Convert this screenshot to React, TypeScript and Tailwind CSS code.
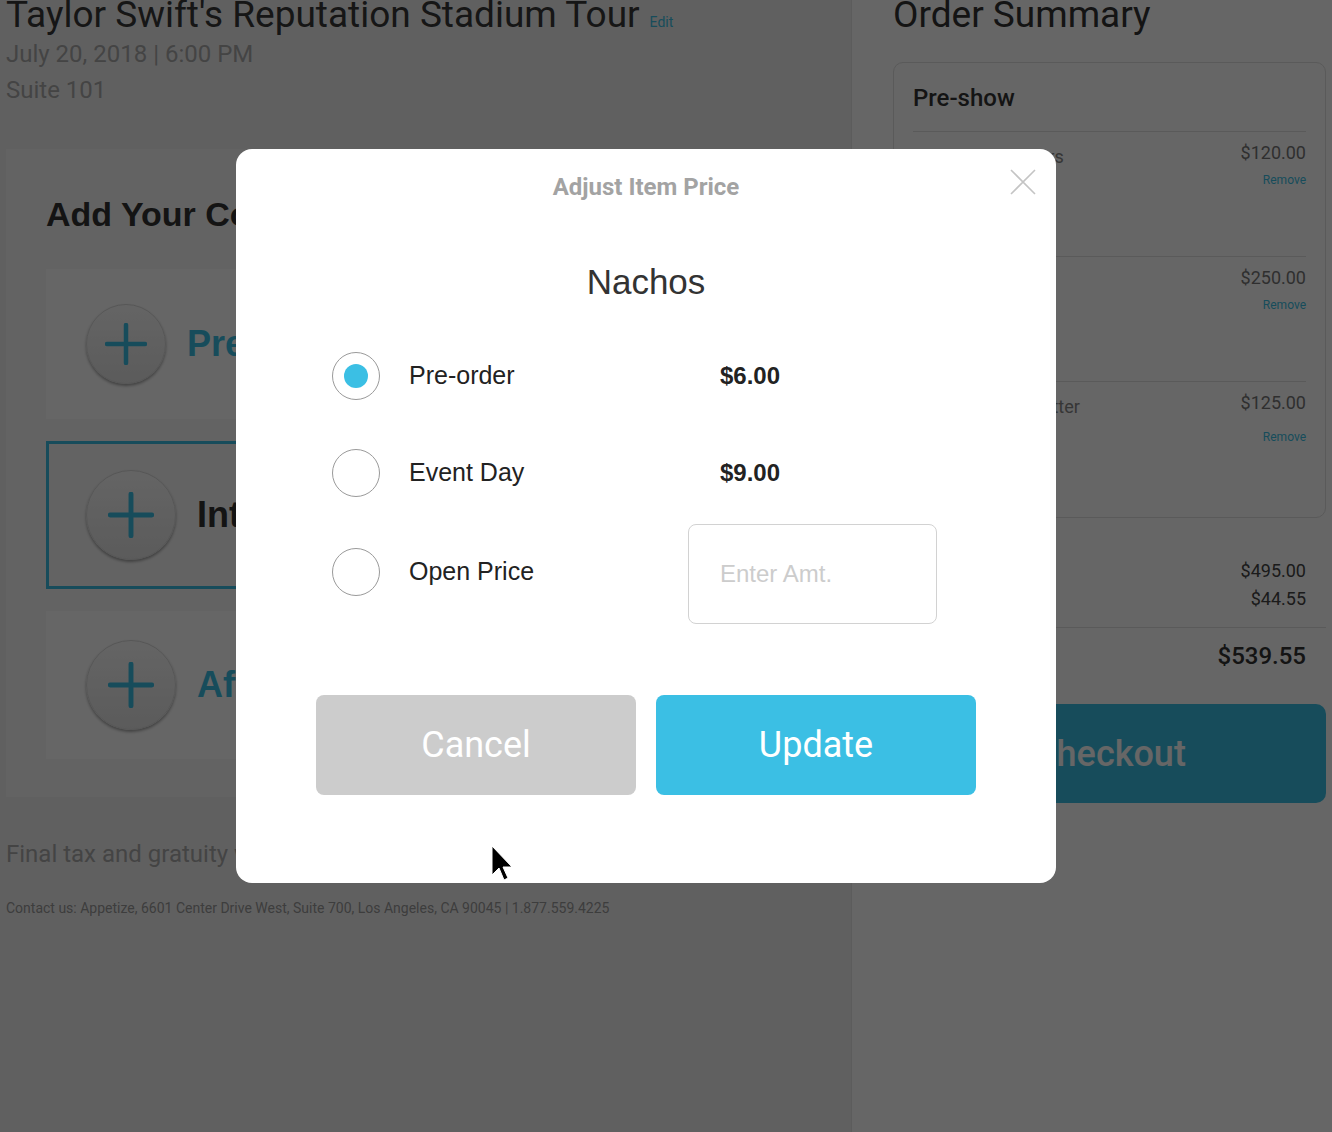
import React from 'react';

const teal = '#3bbfe4';

function PlusButton({ size }: { size: number }) {
    const big = size > 80;
    return (
        <div
            className={`${big ? 'w-[90px] h-[90px]' : 'w-[80px] h-[80px]'} shrink-0 rounded-full bg-gradient-to-b from-[#fbfbfb] to-[#e4e4e4] shadow-[0_2px_3px_rgba(0,0,0,0.35)] border border-[#d8d8d8] flex items-center justify-center`}
        >
            <svg width={big ? 46 : 42} height={big ? 46 : 42} viewBox="0 0 42 42">
                <path d="M21 2v38M2 21h38" stroke={teal} strokeWidth="4.5" strokeLinecap="round" />
            </svg>
        </div>
    );
}

function OrderRow({ name, price, tall }: { name: string; price: string; tall?: boolean }) {
    return (
        <div className={`${tall ? 'h-[136px]' : 'h-[125px]'} border-t border-[#e2e2e2] pt-[9px] flex justify-between`}>
            <div className="text-[18px] leading-[32px] text-[#888]">{name}</div>
            <div className="flex flex-col items-end">
                <div className="text-[18px] leading-[24px] text-[#777]">{price}</div>
                <div className={`${tall ? 'mt-[14px]' : 'mt-[7px]'} text-[12px] leading-[16px] text-[#3bbfe4]`}>Remove</div>
            </div>
        </div>
    );
}

function Radio({ checked, className = '' }: { checked?: boolean; className?: string }) {
    return (
        <div className={`w-[48px] h-[48px] shrink-0 rounded-full border border-[#9a9a9a] flex items-center justify-center ${className}`}>
            {checked && <div className="w-[24px] h-[24px] rounded-full bg-[#3bbfe4]" />}
        </div>
    );
}

export default function App() {
    return (
        <div className="relative w-[1332px] h-[1132px] overflow-hidden flex font-['Roboto',sans-serif]">
            {/* Left column */}
            <div className="w-[851px] bg-[#f1f1f1] pl-[6px]">
                <div className="-mt-[7px] flex items-baseline gap-[10px]">
                    <h1 className="text-[37px] leading-[43px] text-[#383838] whitespace-nowrap">Taylor Swift's Reputation Stadium Tour</h1>
                    <span className="text-[14px] text-[#3bbfe4]">Edit</span>
                </div>
                <p className="text-[24px] leading-[36px] text-[#aaaaaa]">July 20, 2018 | 6:00 PM</p>
                <p className="text-[24px] leading-[36px] text-[#aaaaaa]">Suite 101</p>

                <div className="mt-[41px] w-[844px] h-[648px] bg-[#f8f8f8] px-[40px] pt-[45px]">
                    <h2 className="text-[34px] leading-[40px] font-bold text-[#333] font-['Liberation_Sans',sans-serif]">Add Your Courses</h2>
                    <div className="mt-[35px] flex flex-col gap-[22px]">
                        <div className="h-[150px] bg-white flex items-center pl-[40px] gap-[21px]">
                            <PlusButton size={80} />
                            <span className="text-[36px] font-bold text-[#3bbfe4] font-['Liberation_Sans',sans-serif]">Pre-show</span>
                        </div>
                        <div className="h-[148px] border-[3px] border-[#3bbfe4] flex items-center pl-[37px] gap-[21px]">
                            <PlusButton size={90} />
                            <span className="text-[36px] font-bold text-[#333] font-['Liberation_Sans',sans-serif]">Intermission</span>
                        </div>
                        <div className="h-[148px] bg-white flex items-center pl-[40px] gap-[21px]">
                            <PlusButton size={90} />
                            <span className="text-[36px] font-bold text-[#3bbfe4] font-['Liberation_Sans',sans-serif]">After-show</span>
                        </div>
                    </div>
                </div>

                <p className="mt-[39px] text-[24px] leading-[36px] text-[#aaaaaa]">Final tax and gratuity will be calculated after your event.</p>
                <p className="mt-[26px] text-[14px] leading-[20px] text-[#999]">
                    Contact us: Appetize, 6601 Center Drive West, Suite 700, Los Angeles, CA 90045 | 1.877.559.4225
                </p>
            </div>

            {/* Right column - order summary */}
            <div className="flex-1 bg-white border-l border-[#e6e6e6] pl-[41px] pr-[6px]">
                <h2 className="-mt-[6px] text-[37px] leading-[42px] text-[#333]">Order Summary</h2>
                <div className="mt-[26px] border border-[#e0e0e0] rounded-[10px] px-[19px] pt-[20px]">
                    <h3 className="text-[24px] leading-[30px] font-medium text-[#333] mb-[18px]">Pre-show</h3>
                    <OrderRow name="Mini Slider Burgers" price="$120.00" />
                    <OrderRow name="Nacho Bar" price="$250.00" />
                    <OrderRow name="Chips & Salsa Platter" price="$125.00" tall />
                </div>

                <div className="mt-[41px] pr-[20px] flex justify-between text-[18px] leading-[24px] text-[#444]">
                    <span>Subtotal</span>
                    <span>$495.00</span>
                </div>
                <div className="mt-[4px] pr-[20px] flex justify-between text-[18px] leading-[24px] text-[#444]">
                    <span>Tax</span>
                    <span>$44.55</span>
                </div>
                <div className="mt-[16px] border-t border-[#e0e0e0]" />
                <div className="mt-[13px] pr-[20px] flex justify-between text-[24px] leading-[30px] font-medium text-[#333]">
                    <span>Total</span>
                    <span>$539.55</span>
                </div>
                <button className="mt-[33px] w-full h-[99px] rounded-[10px] bg-[#3bbfe4] text-white text-[36px] font-medium">
                    Checkout
                </button>
            </div>

            {/* Dim overlay */}
            <div className="absolute inset-0 bg-black/60" />

            {/* Modal */}
            <div className="absolute left-[236px] top-[149px] w-[820px] h-[734px] bg-white rounded-[16px] pt-[24px]">
                <h4 className="text-center text-[24px] leading-[28px] font-bold text-[#a3a3a3]">Adjust Item Price</h4>
                <button className="absolute left-[774px] top-[20px] w-[26px] h-[26px]">
                    <svg width="26" height="26" viewBox="0 0 26 26">
                        <path d="M1 1l24 24M25 1L1 25" stroke="#c4c4c4" strokeWidth="1.6" />
                    </svg>
                </button>

                <h3 className="mt-[61px] text-center text-[35px] leading-[40px] text-[#333] font-['Liberation_Sans',sans-serif]">Nachos</h3>

                <div className="font-['Liberation_Sans',sans-serif] text-[25px] text-[#222] pl-[96px]">
                    <div className="mt-[50px] flex items-center">
                        <Radio checked />
                        <span className="ml-[29px] w-[311px]">Pre-order</span>
                        <span className="font-bold text-[24px]">$6.00</span>
                    </div>
                    <div className="mt-[49px] flex items-center">
                        <Radio />
                        <span className="ml-[29px] w-[311px]">Event Day</span>
                        <span className="font-bold text-[24px]">$9.00</span>
                    </div>
                    <div className="mt-[27px] flex items-center">
                        <Radio className="mb-[5px]" />
                        <span className="ml-[29px] w-[279px] mb-[4px]">Open Price</span>
                        <div className="w-[249px] h-[100px] rounded-[8px] border border-[#d2d2d2] flex items-center pl-[31px] text-[24px] text-[#cccccc]">
                            Enter Amt.
                        </div>
                    </div>
                </div>

                <div className="mt-[71px] flex justify-center gap-[20px]">
                    <button className="w-[320px] h-[100px] rounded-[8px] bg-[#cccccc] text-white text-[36px]">Cancel</button>
                    <button className="w-[320px] h-[100px] rounded-[8px] bg-[#3bbfe4] text-white text-[36px]">Update</button>
                </div>
            </div>

            {/* Mouse pointer */}
            <svg className="absolute left-[491px] top-[845px]" width="22" height="38" viewBox="0 0 22 38">
                <path d="M1 1v29l7-7 5 12 4-2-5-11h9z" fill="#000" stroke="#fff" strokeWidth="1" />
            </svg>
        </div>
    );
}
